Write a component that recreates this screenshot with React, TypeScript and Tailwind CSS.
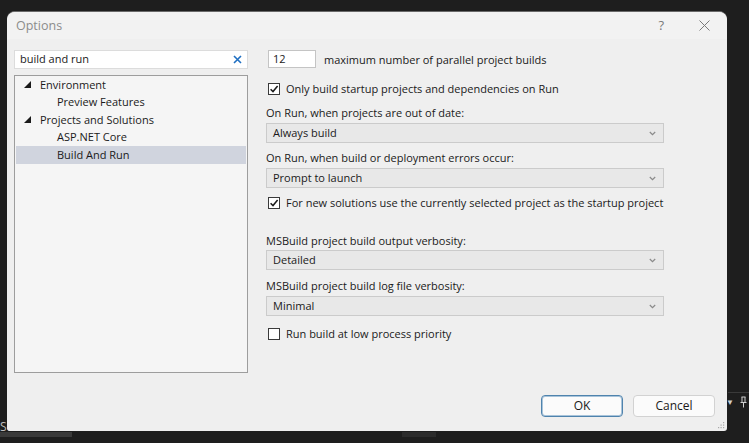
import React from 'react';

const font = { fontFamily: '"Segoe UI", "Open Sans", "Noto Sans", sans-serif' };

function Chevron() {
  return (
    <svg width="7" height="5" viewBox="0 0 7 5" className="shrink-0">
      <path d="M0.8 1 L3.5 3.7 L6.2 1" fill="none" stroke="#8a8a8a" strokeWidth="1.2" />
    </svg>
  );
}

function Dropdown({ value, className = '' }: { value: string; className?: string }) {
  return (
    <div className={`h-[20px] w-[398px] flex items-center justify-between pl-[6px] pr-[7px] bg-[#e8e8e8] border border-[#cbcbcb] text-[#1a1a1a] ${className}`}>
      <span>{value}</span>
      <Chevron />
    </div>
  );
}

function Checkbox({ checked, label, className = '' }: { checked: boolean; label: string; className?: string }) {
  return (
    <div className={`h-[16px] flex items-center gap-[6px] text-[#1a1a1a] whitespace-nowrap ${className}`}>
      <div className="w-[12px] h-[12px] ml-[2px] shrink-0 bg-white border border-[#3a3a3a] flex items-center justify-center">
        {checked && (
          <svg width="10" height="10" viewBox="0 0 10 10">
            <path d="M1.6 5.2 L4 7.6 L8.6 2" fill="none" stroke="#1a1a1a" strokeWidth="1.5" />
          </svg>
        )}
      </div>
      <span>{label}</span>
    </div>
  );
}

function Expander() {
  return (
    <svg width="7" height="7" viewBox="0 0 7 7" className="shrink-0">
      <polygon points="7,0 7,7 0,7" fill="#1a1a1a" />
    </svg>
  );
}

export default function App() {
  const tree: { label: string; depth: number; expander?: boolean; selected?: boolean }[] = [
    { label: 'Environment', depth: 0, expander: true },
    { label: 'Preview Features', depth: 1 },
    { label: 'Projects and Solutions', depth: 0, expander: true },
    { label: 'ASP.NET Core', depth: 1 },
    { label: 'Build And Run', depth: 1, selected: true },
  ];

  return (
    <div className="relative w-[749px] h-[443px] bg-[#1e1e1e] overflow-hidden pt-[11px] pl-[7px] text-[11px]" style={font}>
      {/* editor chrome behind the dialog */}
      <div className="absolute left-0 bottom-0 w-full h-[13px] flex items-start gap-[330px]">
        <div className="w-[72px] h-[5px] mt-[2px] bg-[#3a3a3a]" />
        <div className="w-[34px] h-[5px] mt-[2px] bg-[#2c2c2c]" />
      </div>
      <div className="absolute left-0 top-[418px] text-[12px] text-[#bdbdbd]">Solu</div>
      <div className="absolute right-0 top-[392px] w-[21px] h-px bg-[#3a3a3a]" />
      <div className="absolute right-[2px] top-[396px] flex items-center gap-[6px] text-[#cfcfcf]">
        <span className="text-[8px]">▼</span>
        <svg width="7" height="12" viewBox="0 0 7 12">
          <path d="M1.5 1 H5.5 M2 1 V6 M5 1 V6 M0.5 6.5 H6.5 M3.5 6.5 V11.5" fill="none" stroke="#d0d0d0" strokeWidth="1" />
        </svg>
      </div>

      <div className="relative w-[720px] h-[420px] bg-[#efefef] rounded-t-[8px] rounded-b-[3px] border-t border-[#6a6a6a] flex flex-col">
        {/* title bar */}
        <div className="h-[27px] flex items-center justify-between pl-[9px] pr-[17px] bg-[#f2f2f2] rounded-t-[8px]">
          <span className="text-[12.5px] text-[#8c8c8c] mt-[1px]">Options</span>
          <div className="flex items-center gap-[35px] text-[#7a7a7a]">
            <span className="text-[13px]">?</span>
            <svg width="11" height="11" viewBox="0 0 11 11">
              <path d="M0.5 0.5 L10.5 10.5 M10.5 0.5 L0.5 10.5" stroke="#7a7a7a" strokeWidth="1" />
            </svg>
          </div>
        </div>

        {/* body */}
        <div className="flex pl-[7px]">
          {/* left: search + tree */}
          <div className="w-[234px] flex flex-col mt-[11px]">
            <div className="h-[19px] bg-white border border-[#dcdcdc] flex items-center justify-between pl-[5px] pr-[5px] text-[#1a1a1a]">
              <span>build and run</span>
              <svg width="9" height="9" viewBox="0 0 9 9">
                <path d="M1 1 L8 8 M8 1 L1 8" stroke="#1f6fc2" strokeWidth="1.6" />
              </svg>
            </div>
            <div className="mt-[6px] h-[298px] bg-[#f5f5f5] border border-[#9d9d9d] px-px text-[#1a1a1a]">
              {tree.map((t) => (
                <div
                  key={t.label}
                  className={`h-[17.6px] flex items-center ${t.selected ? 'bg-[#d0d4de]' : ''} ${t.depth === 0 ? 'pl-[8px]' : 'pl-[41px]'}`}
                >
                  {t.expander && <Expander />}
                  <span className={t.expander ? 'ml-[9px]' : ''}>{t.label}</span>
                </div>
              ))}
            </div>
          </div>

          {/* right: settings */}
          <div className="ml-[18px] w-[398px] flex flex-col text-[#1a1a1a] whitespace-nowrap">
            <div className="mt-[11px] h-[18px] flex items-center">
              <div className="w-[48px] h-[18px] ml-[2px] bg-white border border-[#c4c4c4] pl-[4px] flex items-center">12</div>
              <span className="ml-[8px] mt-[3px]">maximum number of parallel project builds</span>
            </div>
            <Checkbox checked label="Only build startup projects and dependencies on Run" className="mt-[13px]" />
            <div className="mt-[8px] h-[16px] flex items-center">On Run, when projects are out of date:</div>
            <Dropdown value="Always build" className="mt-[2px]" />
            <div className="mt-[7px] h-[16px] flex items-center">On Run, when build or deployment errors occur:</div>
            <Dropdown value="Prompt to launch" className="mt-[2px]" />
            <Checkbox checked label="For new solutions use the currently selected project as the startup project" className="mt-[7px]" />
            <div className="mt-[22px] h-[16px] flex items-center">MSBuild project build output verbosity:</div>
            <Dropdown value="Detailed" className="mt-[1px]" />
            <div className="mt-[8px] h-[16px] flex items-center">MSBuild project build log file verbosity:</div>
            <Dropdown value="Minimal" className="mt-[2px]" />
            <Checkbox checked={false} label="Run build at low process priority" className="mt-[10px]" />
          </div>
        </div>

        {/* footer */}
        <div className="mt-auto flex justify-end gap-[10px] pr-[12px] pb-[14px]">
          <button className="w-[82px] h-[22px] bg-[#fbfbfb] border border-[#4f83ad] rounded-[4px] text-[12px] text-[#1a1a1a] shadow-[inset_0_0_0_1px_#a9c4da]">OK</button>
          <button className="w-[82px] h-[22px] bg-[#fbfbfb] border border-[#d2d2d2] rounded-[4px] text-[12px] text-[#1a1a1a]">Cancel</button>
        </div>

        {/* resize grip */}
        <svg width="7" height="7" viewBox="0 0 7 7" className="absolute right-[2px] bottom-[2px]">
          <rect x="5" y="0" width="1.2" height="1.2" fill="#a8a8a8" />
          <rect x="2.5" y="2.5" width="1.2" height="1.2" fill="#a8a8a8" />
          <rect x="5" y="2.5" width="1.2" height="1.2" fill="#a8a8a8" />
          <rect x="0" y="5" width="1.2" height="1.2" fill="#a8a8a8" />
          <rect x="2.5" y="5" width="1.2" height="1.2" fill="#a8a8a8" />
          <rect x="5" y="5" width="1.2" height="1.2" fill="#a8a8a8" />
        </svg>
      </div>
    </div>
  );
}
